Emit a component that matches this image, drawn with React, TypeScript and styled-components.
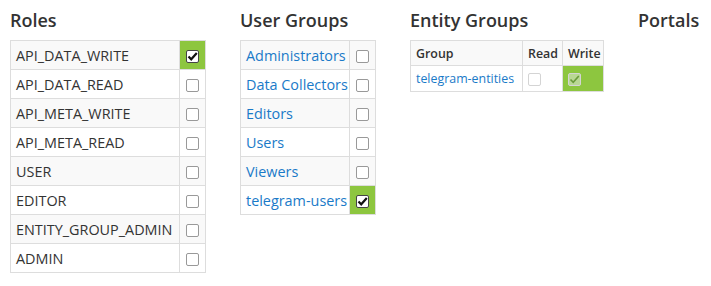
import React from 'react'
import styled, { createGlobalStyle } from 'styled-components'

const roles = [
  { name: 'API_DATA_WRITE', on: true },
  { name: 'API_DATA_READ', on: false },
  { name: 'API_META_WRITE', on: false },
  { name: 'API_META_READ', on: false },
  { name: 'USER', on: false },
  { name: 'EDITOR', on: false },
  { name: 'ENTITY_GROUP_ADMIN', on: false },
  { name: 'ADMIN', on: false },
]

const groups = [
  { name: 'Administrators', on: false },
  { name: 'Data Collectors', on: false },
  { name: 'Editors', on: false },
  { name: 'Users', on: false },
  { name: 'Viewers', on: false },
  { name: 'telegram-users', on: true },
]

const Check = ({ on, faded }: { on?: boolean; faded?: boolean }) => (
  <Box $on={on} $faded={faded}>
    {on && (
      <svg width="11" height="11" viewBox="0 0 11 11">
        <path
          d="M1.5 5.5 L4.2 8.3 L9.8 2"
          fill="none"
          stroke={faded ? '#6a9a3a' : '#111'}
          strokeWidth={faded ? 1.6 : 2.2}
        />
      </svg>
    )}
  </Box>
)

const App = () => {
  return (
    <Page>
      <GlobalStyle />
      <Column>
        <Heading>Roles</Heading>
        <Table $w={196}>
          <colgroup>
            <col />
            <col width={26} />
          </colgroup>
          <tbody>
            {roles.map((r) => (
              <Row key={r.name}>
                <Cell>{r.name}</Cell>
                <CheckCell $on={r.on}>
                  <Check on={r.on} />
                </CheckCell>
              </Row>
            ))}
          </tbody>
        </Table>
      </Column>
      <Column>
        <Heading>User Groups</Heading>
        <Table $w={136}>
          <colgroup>
            <col />
            <col width={26} />
          </colgroup>
          <tbody>
            {groups.map((g) => (
              <Row key={g.name}>
                <Cell>
                  <Link>{g.name}</Link>
                </Cell>
                <CheckCell $on={g.on}>
                  <Check on={g.on} />
                </CheckCell>
              </Row>
            ))}
          </tbody>
        </Table>
      </Column>
      <Column>
        <Heading>Entity Groups</Heading>
        <SmallTable>
          <colgroup>
            <col width={112} />
            <col width={40} />
            <col width={41} />
          </colgroup>
          <thead>
            <tr>
              <Th>Group</Th>
              <Th>Read</Th>
              <Th>Write</Th>
            </tr>
          </thead>
          <tbody>
            <tr>
              <Td>
                <Link>telegram-entities</Link>
              </Td>
              <Td>
                <Check faded />
              </Td>
              <Td $on>
                <Check on faded />
              </Td>
            </tr>
          </tbody>
        </SmallTable>
      </Column>
      <Column>
        <Heading>Portals</Heading>
      </Column>
    </Page>
  )
}

export default App

const GlobalStyle = createGlobalStyle`
body {
  margin: 0;
  background: #fff;
  font-family: "Open Sans", "DejaVu Sans", sans-serif;
  color: #333;
}
`

const Page = styled.div`
display: flex;
align-items: flex-start;
gap: 34px;
padding: 9px 10px;
`

const Column = styled.div`
display: flex;
flex-direction: column;
`

const Heading = styled.div`
font-size: 18px;
font-weight: 600;
line-height: 22px;
color: #333;
margin-bottom: 9px;
`

const Table = styled.table<{ $w: number }>`
border-collapse: collapse;
table-layout: fixed;
width: ${(p) => p.$w}px;
font-size: 14.4px;
`

const Row = styled.tr`
height: 29px;
&:nth-child(odd) {
  background: #f9f9f9;
}
`

const Cell = styled.td`
border: 1px solid #ddd;
padding: 0 5px;
white-space: nowrap;
overflow: hidden;
`

const CheckCell = styled.td<{ $on?: boolean }>`
border: 1px solid #ddd;
padding: 0;
text-align: center;
background: ${(p) => (p.$on ? '#8dc63f' : 'transparent')};
`

const Link = styled.span`
color: #1a7ac8;
`

const Box = styled.span<{ $on?: boolean; $faded?: boolean }>`
display: inline-flex;
align-items: center;
justify-content: center;
box-sizing: border-box;
width: 13px;
height: 13px;
vertical-align: middle;
border-radius: 2px;
border: 1px solid ${(p) => (p.$faded ? '#d4d4d4' : p.$on ? '#444' : '#999')};
background: ${(p) => (p.$faded && p.$on ? '#b9d894' : '#fff')};
`

const SmallTable = styled.table`
border-collapse: collapse;
table-layout: fixed;
width: 193px;
font-size: 12.4px;
`

const Th = styled.th`
border: 1px solid #ddd;
height: 24px;
padding: 0 5px;
text-align: left;
font-weight: 600;
background: #f9f9f9;
`

const Td = styled.td<{ $on?: boolean }>`
border: 1px solid #ddd;
height: 25px;
padding: 0 5px;
white-space: nowrap;
overflow: hidden;
background: ${(p) => (p.$on ? '#8dc63f' : 'transparent')};
`
